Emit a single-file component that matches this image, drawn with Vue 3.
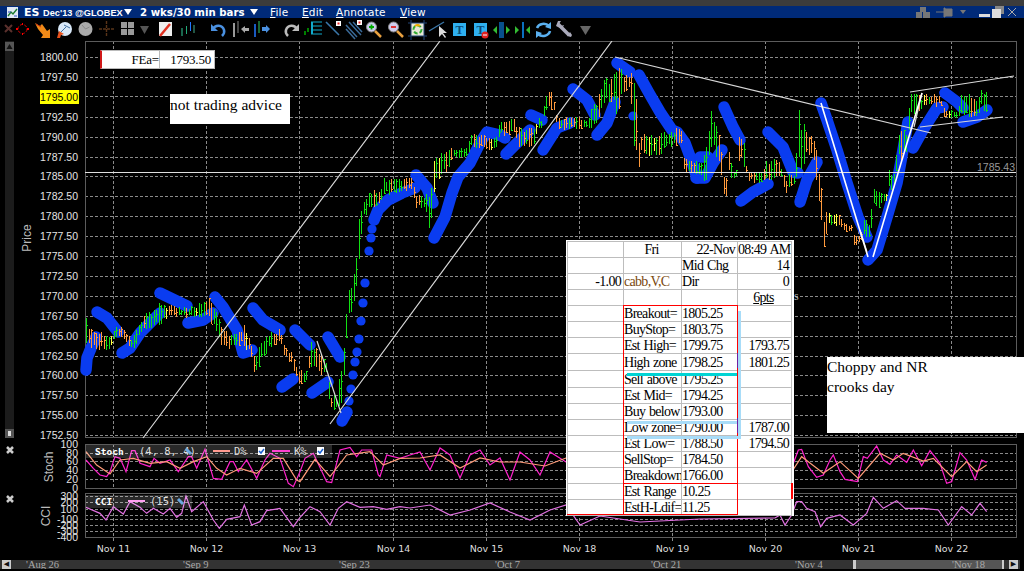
<template>
  <div class="window">
    <header class="titlebar">
      <svg class="app-ic" viewBox="0 0 11 11"><rect width="11" height="11" fill="#dfe8f5"/><path d="M1 9 4 5l2 2 4-5" fill="none" stroke="#1a7a30" stroke-width="1.4"/><path d="M1 5h3M7 9h3" stroke="#3050c0"/></svg>
      <span class="sym"><b>ES</b> <small>Dec'13 @GLOBEX</small></span>
      <i class="caret"></i>
      <span class="period">2 wks/30 min bars</span>
      <i class="caret"></i>
      <nav class="menu">
        <span><u>F</u>ile</span>
        <span><u>E</u>dit</span>
        <span><u>A</u>nnotate</span>
        <span><u>V</u>iew</span>
      </nav>
      <div class="winctl">
        <svg width="16" height="13" viewBox="0 0 16 13"><path d="M5 1h6v5H5zM1 6h6v6H1zM8 6h7v6H8z" fill="#777"/></svg>
        <svg class="pin" width="18" height="13" viewBox="0 0 18 13"><path d="M0 6h8M8 2h1v9H8zM9 3h7v7H9z" stroke="#777" fill="#777"/></svg>
        <i class="caret small"></i>
        <svg class="min" width="11" height="12" viewBox="0 0 11 12"><rect y="8" width="11" height="3" fill="#ddd"/></svg>
        <svg width="12" height="12" viewBox="0 0 12 12"><rect x="3" y="0" width="9" height="8" fill="#888"/><rect y="3" width="9" height="9" fill="#ddd"/></svg>
        <svg width="10" height="10" viewBox="0 0 10 10"><path d="m1 1 8 8M9 1 1 9" stroke="#aaa"/></svg>
      </div>
    </header>

    <div class="toolbar">
      <svg class="ic first" viewBox="0 0 21 22"><path d="m7 6 7 7M14 6l-7 7" stroke="#5a302c" stroke-width="2"/></svg>
      <svg class="ic back7" viewBox="0 0 21 22"><circle cx="10.5" cy="10" r="4.5" fill="none" stroke="#c00" stroke-width="1" stroke-dasharray="3 1.5"/><path d="M10 4h1v2h-1zM10 14h1v2h-1zM4 9h2v2H4zM15 9h2v2h-2z" fill="#f00"/></svg>
      <svg class="ic" viewBox="0 0 21 22"><path d="m2 4 5 3 2-2 5 7 3-2v9H8l2-3-5-6z" fill="#f08a18"/><path d="m3 5 5 3" stroke="#d03010"/></svg>
      <svg class="ic" viewBox="0 0 21 22"><circle cx="11" cy="10" r="7" fill="#d8e8f8"/><path d="M7 13 12 8M10 6l6 3" stroke="#4070a0"/><path d="m3 19 2-7 5 3-3 1-1 3z" fill="#e8501a"/></svg>
      <svg class="ic" viewBox="0 0 21 22"><circle cx="10.5" cy="10" r="7" fill="#aaa"/><path d="M10.5 10 7 6M10.5 10l4-2" stroke="#888"/></svg>
      <svg class="ic" viewBox="0 0 21 22"><path d="M10.5 2v16M3 10h15" stroke="#5a3418" stroke-width="1.4" stroke-dasharray="3 1"/></svg>
      <svg class="ic" viewBox="0 0 21 22"><path d="M4 3h6v6H4zM11 3h6v6h-6zM4 10h6v6H4zM11 10h6v6h-6z" fill="#999"/></svg>
      <svg class="ic back4" viewBox="0 0 21 22"><path d="m6 7h9l-4.500 8z" fill="#555"/></svg>
      <svg class="ic" viewBox="0 0 21 22"><rect x="4" y="3" width="13" height="14" fill="#eee"/><path d="m5 17 10-12" stroke="#e03020" stroke-width="2.500"/></svg>
      <svg class="ic on1" viewBox="0 0 21 22"><path d="M5 9v8" stroke="#3c9" /><path d="M9.500 7v8" stroke="#2a7"/><path d="M13.500 3v9" stroke="#27f"/><path d="M17 6v8" stroke="#4a8"/></svg>
      <svg class="ic on10" viewBox="0 0 21 22"><path d="M5 10a6 6 0 0 1 11 1q1 3-2 6" fill="none" stroke="#4a90e0" stroke-width="2.500"/><path d="M3 5v7h7z" fill="#4a90e0"/></svg>
      <svg class="ic" viewBox="0 0 21 22"><path d="M5 4v14" stroke="#999" stroke-width="2"/><path d="M9 2v12" stroke="#888"/><path d="m12 10 4-3v2h4v3h-4v2z" fill="#aaa"/></svg>
      <svg class="ic on1" viewBox="0 0 21 22"><path d="M4 5v13" stroke="#27f" stroke-width="1.500"/><path d="M8 2v12" stroke="#3c6"/><path d="M11 8h4V6l4 4-4 4v-2h-4z" fill="#4a90e0"/></svg>
      <svg class="ic on9" viewBox="0 0 21 22"><path d="M16 10a6 6 0 0 0-11 1q-1 3 2 6" fill="none" stroke="#bbb" stroke-width="2.500"/><path d="M18 5v7h-7z" fill="#bbb"/></svg>
      <svg class="ic on1" viewBox="0 0 21 22"><path d="M2 16v-4M5 13V9" stroke="#0a0" stroke-width="1.500"/><path d="M8 3h11M8 7h11M8 11h11M8 15h11" stroke="#1ac" /><path d="M9 3v12" stroke="#1ac" stroke-width="2"/></svg>
      <svg class="ic back1" viewBox="0 0 21 22"><path d="m3 3 13 13" stroke="#3a76a8" stroke-width="1.600"/><rect x="13" y="2" width="5" height="5" fill="#fff"/><rect x="14.500" y="3.500" width="2" height="2" fill="#e22"/></svg>
      <svg class="ic" viewBox="0 0 21 22"><path d="m2 6 11 12M2 10l9 10M5 3l12 13M9 3l9 10" stroke="#3a6a98" stroke-width="1.500"/><rect x="13" y="1" width="5" height="5" fill="#fff"/><rect x="14.500" y="2.500" width="2" height="2" fill="#e22"/></svg>
      <svg class="ic back2" viewBox="0 0 21 22"><circle cx="8.500" cy="8" r="5" fill="#cce" stroke="#888"/><path d="M6 8h5M8.500 5.500v5" stroke="#0a0" stroke-width="1.800"/><path d="m12 12 6 6" stroke="#e8a040" stroke-width="2.500"/></svg>
      <svg class="ic on1" viewBox="0 0 21 22"><circle cx="8.500" cy="8" r="5" fill="#cce" stroke="#888"/><path d="M6 8h5" stroke="#d22" stroke-width="1.800"/><path d="m12 12 6 6" stroke="#e8a040" stroke-width="2.500"/></svg>
      <svg class="ic on1" viewBox="0 0 21 22"><rect x="4" y="4" width="13" height="13" fill="#e8e8d8"/><circle cx="10.500" cy="10.500" r="4" fill="none" stroke="#3a3" stroke-width="2" stroke-dasharray="4 2"/><path d="M8 7a4 4 0 0 1 5 0" fill="none" stroke="#ea0" stroke-width="2"/><path d="M4 1v20M17 1v20M1 4h19M1 17h19" stroke="#247" /></svg>
      <svg class="ic" viewBox="0 0 21 22"><path d="m1 12 15-9" stroke="#3a76a8" stroke-width="1.400"/><path d="M11 7v11l3-3 3 4 1-1-3-4h4z" fill="#ddd"/></svg>
      <svg class="ic" viewBox="0 0 21 22"><rect x="4" y="4" width="13" height="13" fill="#2fb0f0"/><text x="10.500" y="15" class="t-ic">T</text></svg>
      <svg class="ic" viewBox="0 0 21 22"><rect x="4" y="4" width="13" height="13" fill="#2fb0f0"/><text x="10.500" y="15" class="t-ic">T</text><circle cx="15" cy="16" r="3.500" fill="#e02020"/><path d="M13 16h4" stroke="#fff"/></svg>
      <svg class="ic" viewBox="0 0 21 22"><rect x="8" y="3" width="5" height="16" fill="#08508c"/><path d="M6 7v8l-4-4zM15 7v8l4-4z" fill="#3b3"/></svg>
      <svg class="ic" viewBox="0 0 21 22"><rect x="10" y="3" width="2" height="16" fill="#0a70c0"/><path d="M3 7v8l4-4zM18 7v8l-4-4z" fill="#3b3"/></svg>
      <svg class="ic" viewBox="0 0 21 22"><path d="M4 9a7 6 0 0 1 12-2M17 12a7 6 0 0 1-12 3" fill="none" stroke="#5ab0f0" stroke-width="2.500"/><path d="m18 3 0 7-6-2zM3 19l0-7 6 2z" fill="#5ab0f0"/></svg>
      <svg class="ic back1" viewBox="0 0 21 22"><path d="m5 5 11 11" stroke="#aab" stroke-width="3.500"/><path d="M3 7 5 2h3L6 5l2 2 3-1-2 4zM14 17l3-4 2 3-1 2z" fill="#aab"/></svg>
      <svg class="ic on1" viewBox="0 0 21 22"><path d="M5 7h11l-5.500 9z" fill="#666"/></svg>
    </div>

    <div class="chart">
      <svg class="canvas" viewBox="0 41 1024 519" width="1024" height="519">
        <!-- left strip -->
        <rect x="5" y="41" width="9" height="397" fill="#1c1c1c"/>
        <rect x="5" y="42" width="9" height="9" fill="#555"/>
        <path d="M6.500 49 9.500 44l3 5z" fill="#111"/>
        <rect x="5" y="429" width="9" height="9" fill="#555"/>
        <rect x="8" y="431" width="3" height="5" fill="#ddd"/>
        <path d="m7 447 6 6M13 447l-6 6M7 496l6 6M13 496l-6 6" stroke="#ccc" stroke-width="2.500"/>

        <!-- grids -->
        <g class="grid">
          <path v-for="x in dayXs" :key="x" :d="`M${x} 41V437M${x} 444V489M${x} 493V541`"/>
          <path v-for="p in priceRows" :key="p.label" :d="`M85 ${p.y}H1016`"/>
          <path v-for="y in stochYs" :key="'s' + y" :d="`M85 ${y}H1016`"/>
          <path v-for="y in cciYs" :key="'c' + y" :d="`M85 ${y}H1016`"/>
        </g>
        <g class="frame">
          <rect x="85.500" y="41.500" width="931" height="396"/>
          <rect x="85.500" y="444.500" width="931" height="44"/>
          <rect x="85.500" y="493.500" width="931" height="44"/>
        </g>

        <!-- axis labels -->
        <text v-for="p in priceRows" :key="p.label" x="78" :y="p.y + 3.5" class="axis">{{ p.label }}</text>
        <rect x="40" y="90" width="39" height="14" fill="#ffff00"/>
        <text x="78" y="100.500" class="axis dark">1795.00</text>
        <text v-for="s in stochLabels" :key="s.t" x="78" :y="s.y + 4" class="axis">{{ s.t }}</text>
        <text v-for="s in cciLabels" :key="s.t" x="78" :y="s.y + 4" class="axis">{{ s.t }}</text>
        <text class="side" transform="translate(31 238) rotate(-90)">Price</text>
        <text class="side" transform="translate(53 467) rotate(-90)">Stoch</text>
        <text class="side" transform="translate(50 516) rotate(-90)">CCI</text>
        <text v-for="d in days" :key="d.t" :x="d.x" y="552" class="date">{{ d.t }}</text>

        <!-- blue trend dots -->
        <g class="blue">
          <polyline v-for="(s, i) in blueSegs" :key="i" :points="s.join(' ')"/>
        </g>
        <circle v-for="(d, i) in blueDots" :key="i" :cx="d[0]" :cy="d[1]" r="4.600" fill="#0a3cf0"/>

        <!-- price bars -->
        <path :d="bars.green" class="bar" stroke="#12e012"/>
        <path :d="bars.orange" class="bar" stroke="#ff9a3c"/>
        <path :d="bars.yellow" class="bar" stroke="#ffff40"/>

        <!-- drawn lines -->
        <g class="lines">
          <path d="M143 438 440 41M330 424 612 41M615 57 931 133M910 92 1014 76M920 127 1003 117M317 341 341 413M860 230 867 252M914 127 922 93"/>
          <path class="thin" d="M85 172.500H1016"/>
          <path class="thick" d="M821 103 868 257M873 257 922 93"/>
        </g>
        <text x="1015" y="171" class="last">1785.43</text>

        <!-- stoch + cci -->
        <polyline :points="stochK" class="ln" stroke="#ff22cc"/>
        <polyline :points="stochD" class="ln" stroke="#ff9a78"/>
        <polyline :points="cci" class="ln" stroke="#e070e0"/>

        <rect x="86" y="445" width="246" height="13" fill="#fff" opacity=".16"/>
        <rect x="86" y="495" width="106" height="13" fill="#fff" opacity=".16"/>
        <text x="95" y="455" class="lg b">Stoch</text>
        <text x="139" y="455" class="lg">(4, 8, 4)</text>
        <path d="m186 449 5 5" stroke="#6aa8e0" stroke-width="3"/>
        <path d="M213 451h17" stroke="#ff9a90" stroke-width="2"/>
        <text x="234" y="455" class="lg">D%</text>
        <rect x="258" y="447" width="7" height="8" fill="#fff"/>
        <path d="m259 451 2 2 3-4" fill="none" stroke="#1a60d0" stroke-width="1.500"/>
        <path d="M272 451h18" stroke="#ff40d0" stroke-width="2"/>
        <text x="294" y="455" class="lg">K%</text>
        <rect x="317" y="447" width="7" height="8" fill="#fff"/>
        <path d="m318 451 2 2 3-4" fill="none" stroke="#1a60d0" stroke-width="1.500"/>
        <text x="95" y="505" class="lg b">CCI</text>
        <path d="M128 501h17" stroke="#ffa0f0" stroke-width="2"/>
        <text x="150" y="505" class="lg">(15)</text>
        <path d="m178 499 5 5" stroke="#6aa8e0" stroke-width="3"/>
        <text x="794" y="300" class="stray">s</text>
      </svg>

      <div class="fea">
        <span class="fea-l">FEa=</span>
        <span class="fea-v">1793.50</span>
      </div>
      <div class="note advice">not trading advice</div>
      <div class="note choppy">Choppy and NR<br>crooks day</div>

      <div class="sheet">
        <table>
          <tr v-for="(r, i) in sheetRows" :key="i" :class="{ tall: i === 7 || i === 8 }">
            <td class="num">{{ r[0] }}</td>
            <td :class="{ cabb: r[1] === 'cabb,V,C', ctr: r[1] === 'Fri' }">{{ r[1] }}</td>
            <td :class="{ num: r[2] === '22-Nov' }">{{ r[2] }}</td>
            <td class="num" :class="{ und: r[3] === '6pts' }">{{ r[3] }}</td>
          </tr>
        </table>
        <i class="redline rt"></i>
        <i class="redline rb"></i>
        <i class="redline rl"></i>
        <i class="redline rr"></i>
        <i class="redline redsplit"></i>
        <i class="redline redleft"></i>
        <i class="redline redright"></i>
        <i class="purple p1"></i>
        <i class="purple p2"></i>
        <i class="mark cyan"></i>
        <i class="mark sky s1"></i>
        <i class="mark sky s2"></i>
        <i class="mark skyv"></i>
      </div>
    </div>

    <footer class="scrollbar">
      <b class="arrow">◀</b>
      <span v-for="m in months" :key="m.t" class="month" :style="{ width: m.w + 'px' }">{{ m.t }}</span>
      <i class="thumb"></i>
      <b class="arrow right">▶</b>
    </footer>
  </div>
</template>

<script setup>
import { computed } from 'vue'

const dayXs = [113, 206, 299, 393, 486, 579, 672, 765, 858, 951].map(x => x + 0.5)
const days = ['Nov 11', 'Nov 12', 'Nov 13', 'Nov 14', 'Nov 15', 'Nov 18', 'Nov 19', 'Nov 20', 'Nov 21', 'Nov 22']
  .map((t, i) => ({ t, x: dayXs[i] }))

const priceRows = []
for (let i = 0; i < 20; i++) {
  const price = 1800 - i * 2.5
  if (price === 1795) {
    priceRows.push({ label: '', y: 96.5 })
    continue
  }
  priceRows.push({ label: price.toFixed(2), y: Math.round(57 + i * 19.9) + 0.5 })
}

const stochYs = [453.5, 461.5, 470.5, 479.5]
const cciYs = [496.5, 502.5, 509.5, 515.5, 519.5, 525.5, 531.5]
const stochLabels = [
  { t: '100', y: 444 }, { t: '80', y: 453 }, { t: '60', y: 461 },
  { t: '40', y: 470 }, { t: '20', y: 479 }, { t: '0', y: 488 },
]
const cciLabels = [
  { t: '300', y: 496 }, { t: '200', y: 502 }, { t: '100', y: 509 },
  { t: '-100', y: 519 }, { t: '-200', y: 525 }, { t: '-300', y: 531 }, { t: '-400', y: 537 },
]

const blueSegs = [
  [[86, 370], [87, 358], [91, 348], [96, 337]],
  [[97, 312], [107, 318], [118, 332]],
  [[122, 353], [130, 348], [140, 333], [150, 323], [160, 313]],
  [[160, 293], [187, 306]],
  [[188, 323], [203, 320], [213, 313]],
  [[215, 297], [223, 307], [237, 330], [243, 353], [252, 350]],
  [[253, 308], [263, 320], [280, 330]],
  [[282, 387], [293, 379]],
  [[295, 330], [310, 345]],
  [[312, 393], [328, 382]],
  [[328, 337], [340, 357]],
  [[342, 421], [347, 412]],
  [[374, 220], [378, 210], [388, 200], [402, 193], [415, 188]],
  [[416, 175], [427, 188], [433, 203]],
  [[434, 238], [445, 217], [452, 193], [458, 177], [470, 163], [480, 143], [487, 132], [500, 135], [505, 138]],
  [[506, 154], [520, 140], [530, 130]],
  [[531, 115], [542, 120]],
  [[543, 150], [557, 128], [570, 123]],
  [[573, 89], [587, 100], [595, 115]],
  [[597, 135], [607, 123], [615, 102]],
  [[617, 63], [630, 72]],
  [[639, 75], [649, 93], [660, 112], [672, 130], [677, 132], [685, 143], [692, 162], [697, 178]],
  [[696, 178], [705, 178], [713, 163], [722, 150]],
  [[700, 157], [708, 157]],
  [[724, 107], [733, 127], [740, 140]],
  [[741, 201], [753, 192], [768, 184]],
  [[768, 132], [783, 147], [793, 172], [798, 173]],
  [[800, 202], [807, 180], [817, 162]],
  [[821, 103], [827, 120], [837, 150], [847, 183], [858, 217], [867, 237]],
  [[868, 260], [877, 250], [887, 217], [897, 183], [903, 150], [908, 122]],
  [[913, 148], [923, 130], [937, 108], [943, 107]],
  [[945, 93], [957, 102], [963, 108]],
  [[963, 122], [977, 117], [987, 110]],
]
const blueDots = [
  [349, 401], [351, 389], [353, 375], [355, 362], [357, 352], [359, 339], [361, 321],
  [363, 303], [365, 283], [369, 251], [371, 238], [372, 229], [633, 116],
]

// [x, top of bars, bottom of bars] read off the reference
const envelope = [
  [86, 318, 350], [92, 325, 350], [100, 330, 352], [108, 335, 352], [115, 328, 342], [122, 322, 338],
  [130, 338, 352], [137, 325, 345], [145, 310, 330], [152, 312, 328], [160, 300, 325], [170, 305, 318],
  [185, 307, 318], [195, 305, 318], [205, 295, 318], [212, 300, 325], [220, 320, 345], [230, 335, 350],
  [243, 323, 347], [250, 338, 355], [255, 353, 380], [262, 338, 360], [270, 330, 350], [280, 328, 345],
  [285, 347, 358], [293, 352, 367], [297, 370, 385], [307, 368, 385], [310, 340, 370], [320, 353, 377],
  [327, 360, 377], [330, 393, 413], [337, 393, 413], [343, 347, 407], [347, 295, 325], [353, 280, 313],
  [358, 223, 270], [363, 197, 223], [368, 190, 210], [380, 190, 205], [383, 177, 197], [413, 177, 190],
  [415, 193, 208], [427, 193, 213], [430, 193, 237], [435, 150, 183], [447, 150, 175], [452, 147, 160],
  [467, 147, 158], [470, 132, 150], [483, 132, 148], [487, 137, 150], [497, 137, 150], [500, 117, 137],
  [513, 117, 135], [520, 127, 150], [533, 127, 150], [537, 117, 133], [543, 117, 130], [545, 90, 110],
  [553, 92, 110], [557, 117, 130], [590, 117, 130], [592, 93, 132], [597, 100, 125], [603, 77, 103],
  [613, 77, 103], [615, 63, 107], [617, 63, 125], [622, 70, 93], [630, 72, 93], [635, 73, 170],
  [638, 135, 177], [640, 133, 157], [663, 133, 155], [670, 127, 147], [682, 127, 147], [683, 153, 172],
  [700, 160, 180], [707, 137, 187], [711, 107, 150], [718, 122, 163], [723, 170, 198], [727, 170, 198],
  [729, 142, 180], [733, 170, 178], [737, 170, 178], [739, 137, 170], [743, 133, 163], [747, 170, 183],
  [763, 172, 183], [767, 157, 183], [777, 157, 180], [782, 167, 180], [786, 173, 200], [790, 173, 187],
  [795, 173, 187], [798, 103, 170], [803, 120, 170], [807, 130, 157], [813, 130, 157], [818, 150, 213],
  [820, 173, 213], [823, 210, 260], [827, 210, 227], [840, 212, 227], [843, 223, 233], [852, 223, 233],
  [853, 233, 245], [860, 233, 245], [863, 220, 240], [870, 220, 240], [873, 185, 210], [880, 185, 210],
  [883, 193, 202], [887, 193, 202], [888, 168, 192], [895, 168, 192], [897, 125, 167], [907, 125, 160],
  [910, 93, 117], [920, 95, 117], [923, 93, 107], [940, 95, 107], [945, 107, 120], [957, 110, 120],
  [962, 90, 117], [970, 92, 117], [973, 97, 117], [980, 97, 117], [981, 83, 107], [983, 90, 117], [987, 90, 117],
]

function sample(x) {
  for (let i = 1; i < envelope.length; i++) {
    const [x1, t1, b1] = envelope[i]
    const [x0, t0, b0] = envelope[i - 1]
    if (x <= x1) {
      const k = (x - x0) / (x1 - x0 || 1)
      return [t0 + (t1 - t0) * k, b0 + (b1 - b0) * k]
    }
  }
  return [90, 117]
}

const bars = computed(() => {
  let seed = 1123
  const rnd = () => {
    seed = (seed * 16807) % 2147483647
    return seed / 2147483647
  }
  const out = { green: '', orange: '', yellow: '' }
  for (let fx = 86; fx <= 987; fx += 2.5) {
    const x = Math.round(fx)
    const [top, bottom] = sample(x)
    const span = bottom - top
    const hi = Math.round(top + rnd() * span * 0.3)
    const lo = Math.round(bottom - rnd() * span * 0.3)
    // rising stretches are mostly green, falling ones mostly orange
    const slope = sample(Math.max(86, x - 8))[0] - sample(x + 8)[0]
    const greenOdds = slope > 3 ? 0.9 : slope < -3 ? 0.12 : 0.5
    const roll = rnd()
    const key = roll < 0.05 ? 'yellow' : rnd() < greenOdds ? 'green' : 'orange'
    const c = Math.round(hi + rnd() * (lo - hi))
    out[key] += `M${x + 0.5} ${hi}V${lo}M${x + 1} ${c + 0.5}H${x + 2}`
  }
  return out
})

// indicator points, kept in zoomed crop units for the left and right thirds
const toPts = (list, ox, oy) => list.map(([x, y]) => `${ox + x / 3},${oy + y / 3}`)

const stochK = [
  ...toPts([[258, 90], [280, 115], [300, 135], [320, 140], [330, 125], [345, 80], [360, 85], [378, 125], [395, 62], [405, 62], [420, 100], [450, 110], [462, 85], [480, 100], [510, 90], [535, 125], [565, 80], [575, 80], [590, 115], [615, 58], [640, 145], [665, 148], [690, 95], [700, 95], [715, 125], [740, 90], [770, 145], [795, 90], [810, 70], [840, 85], [865, 160], [880, 170], [900, 125], [915, 85], [940, 70], [980, 155], [995, 158], [1020, 60], [1050, 52], [1070, 80], [1085, 60], [1115, 60], [1135, 135], [1140, 140], [1160, 75], [1200, 85]], 0, 430),
  '410,455', '420,452', '430,470', '440,448', '450,455', '460,478', '470,455', '480,450', '490,465', '500,458', '510,480', '520,452', '530,460', '540,475', '550,452', '566,462',
  '600,465', '700,465',
  ...toPts([[0, 100], [40, 100], [55, 60], [65, 58], [85, 110], [110, 142], [130, 135], [150, 90], [160, 75], [180, 125], [195, 148], [232, 155], [250, 80], [262, 85], [290, 48], [310, 90], [330, 103], [350, 75], [380, 97], [400, 60], [425, 107], [450, 62], [480, 100], [500, 160], [515, 155], [540, 68], [560, 90], [585, 148], [605, 90], [620, 97]], 780, 430),
].join(' ')

const stochD = [
  ...toPts([[258, 65], [290, 105], [330, 132], [360, 90], [400, 85], [450, 100], [500, 95], [540, 115], [580, 95], [620, 80], [650, 115], [680, 135], [720, 115], [770, 130], [820, 85], [850, 85], [890, 150], [900, 155], [945, 88], [990, 140], [1040, 75], [1110, 65], [1150, 105], [1200, 85]], 0, 430),
  '420,458', '440,455', '460,468', '480,458', '500,462', '520,462', '545,466', '566,458', '700,465',
  ...toPts([[0, 110], [40, 118], [65, 80], [85, 95], [130, 130], [180, 95], [235, 145], [300, 70], [340, 90], [370, 70], [430, 93], [460, 85], [515, 140], [560, 95], [590, 125], [620, 105]], 780, 430),
].join(' ')

const cci = [
  ...toPts([[258, 232], [300, 250], [318, 270], [340, 230], [370, 252], [390, 215], [420, 232], [440, 250], [460, 235], [490, 252], [510, 235], [530, 262], [545, 250], [558, 198], [575, 245], [610, 215], [640, 270], [658, 295], [680, 268], [720, 260], [733, 225], [755, 285], [780, 275], [800, 242], [840, 235], [880, 290], [900, 262], [930, 230], [960, 245], [990, 285], [1015, 235], [1040, 215], [1080, 232], [1120, 230], [1160, 238], [1200, 230]], 0, 430),
  '410,508', '430,505', '450,515', '470,510', '490,503', '510,512', '530,520', '550,510', '566,505',
  '580,525', '600,516', '640,522', '700,519', '775,518',
  ...toPts([[0, 255], [15, 285], [35, 255], [50, 215], [65, 215], [80, 235], [105, 245], [122, 290], [140, 265], [180, 255], [220, 285], [260, 250], [280, 202], [310, 235], [350, 212], [375, 235], [430, 235], [475, 240], [505, 285], [545, 230], [575, 255], [600, 220], [620, 245]], 780, 430),
].join(' ')

const sheetRows = [
  ['', 'Fri', '22-Nov', '08:49 AM'],
  ['', '', 'Mid Chg', '14'],
  ['-1.00', 'cabb,V,C', 'Dir', '0'],
  ['', '', '', '6pts'],
  ['', 'Breakout=', '1805.25', ''],
  ['', 'BuyStop=', '1803.75', ''],
  ['', 'Est High=', '1799.75', '1793.75'],
  ['', 'High zone', '1798.25', '1801.25'],
  ['', 'Sell above', '1795.25', ''],
  ['', 'Est Mid=', '1794.25', ''],
  ['', 'Buy below', '1793.00', ''],
  ['', 'Low zone=', '1790.00', '1787.00'],
  ['', 'Est Low=', '1788.50', '1794.50'],
  ['', 'SellStop=', '1784.50', ''],
  ['', 'Breakdown', '1766.00', ''],
  ['', 'Est Range', '10.25', ''],
  ['', 'EstH-Ldif=', '11.25', ''],
]

const months = [
  { t: "'Aug 26", w: 157 }, { t: "'Sep 9", w: 156 }, { t: "'Sep 23", w: 156 }, { t: "'Oct 7", w: 156 },
  { t: "'Oct 21", w: 144 }, { t: "'Nov 4", w: 157 }, { t: "'Nov 18", w: 50 },
]
</script>

<style>
html, body { margin: 0; background: #000; overflow: hidden; }
</style>

<style scoped>
.window { width: 1024px; height: 571px; box-sizing: border-box; background: #000; border-top: 6px solid #3c3c3c; display: flex; flex-direction: column; font-family: "Liberation Sans", sans-serif; overflow: hidden; }

.titlebar { height: 12px; flex: none; background: #002a78; color: #fff; display: flex; align-items: center; padding-left: 7px; font-family: "DejaVu Sans", sans-serif; font-size: 10.5px; white-space: nowrap; }
.app-ic { width: 11px; height: 11px; flex: none; margin-right: 6px; }
.sym { font-weight: bold; width: 95px; flex: none; }
.sym b { font-size: 11px; }
.sym small { font-family: "Liberation Sans", sans-serif; font-size: 9.2px; }
.caret { width: 0; height: 0; border-left: 4.5px solid transparent; border-right: 4.5px solid transparent; border-top: 6px solid #fff; margin: 0 8px 0 5px; flex: none; }
.caret.small { border-left-width: 3px; border-right-width: 3px; border-top: 4px solid #777; margin: 0 10px 0 3px; }
.period { font-weight: bold; font-size: 10.2px; width: 105px; flex: none; }
.menu { display: flex; margin-left: 4px; font-size: 10.5px; letter-spacing: .2px; }
.menu span:nth-child(1) { width: 32px; }
.menu span:nth-child(2) { width: 34px; }
.menu span:nth-child(3) { width: 64px; }
.winctl { margin-left: auto; margin-right: 7px; display: flex; align-items: center; gap: 3px; }
.pin { margin-left: 2px; }
.min { margin-right: -1px; }

.toolbar { height: 23px; flex: none; display: flex; align-items: center; }
.ic { width: 21px; height: 22px; flex: none; }
.first { margin-left: -2.5px; }
.back7 { margin-left: -7px; }
.back4 { margin-left: -4px; }
.back2 { margin-left: -2px; }
.back1 { margin-left: -1px; }
.on1 { margin-left: 1px; }
.on9 { margin-left: 9px; }
.on10 { margin-left: 10px; }
.t-ic { font-family: "Liberation Serif", serif; font-weight: bold; font-size: 12px; text-anchor: middle; fill: #0a4a78; }

.chart { position: relative; height: 519px; flex: none; }
.canvas { display: block; }
.grid path { stroke: #8a8a8a; stroke-dasharray: 3 2; fill: none; shape-rendering: crispEdges; }
.frame rect { fill: none; stroke: #5c5c5c; shape-rendering: crispEdges; }
.axis { font-family: "Liberation Sans", sans-serif; font-size: 10.5px; fill: #e4e4e4; text-anchor: end; }
.axis.dark { fill: #000; }
.side { font-family: "Liberation Sans", sans-serif; font-size: 12px; fill: #bbb; text-anchor: middle; }
.date { font-family: "DejaVu Sans", sans-serif; font-size: 9.5px; fill: #ddd; text-anchor: middle; }
.blue polyline { fill: none; stroke: #0a3cf0; stroke-width: 11.5; stroke-linecap: round; stroke-linejoin: round; }
.bar { fill: none; stroke-width: 1; shape-rendering: crispEdges; }
.lines path { fill: none; stroke: #d8d8d8; stroke-width: 1.2; }
.lines .thin { stroke: #e0e0e0; stroke-width: 1; shape-rendering: crispEdges; }
.lines .thick { stroke: #fff; stroke-width: 1.6; }
.last { font-family: "Liberation Sans", sans-serif; font-size: 10.5px; fill: #999; text-anchor: end; }
.ln { fill: none; stroke-width: 1.2; }
.lg { font-family: "DejaVu Sans Mono", monospace; font-size: 10.5px; fill: #ddd; }
.lg.b { font-weight: bold; font-size: 9.5px; fill: #fff; }
.stray { font-family: "Liberation Serif", serif; font-size: 12px; fill: #bbb; }

.fea { position: absolute; left: 100px; top: 9px; width: 115px; height: 19px; box-sizing: border-box; background: #fff; border: 1px solid #bbb; border-left: 2px solid #d01818; display: flex; font-family: "Liberation Serif", serif; font-size: 13px; letter-spacing: -.2px; line-height: 17px; color: #000; }
.fea-l { width: 57px; text-align: right; border-right: 1px solid #bbb; padding-right: 0; }
.fea-v { flex: 1; text-align: right; padding-right: 3px; }
.note { position: absolute; background: #fff; color: #000; font-family: "Liberation Serif", serif; font-size: 15.5px; box-sizing: border-box; }
.advice { left: 170px; top: 53px; width: 120px; height: 30px; line-height: 22px; white-space: nowrap; }
.choppy { left: 827px; top: 316px; width: 197px; height: 76px; line-height: 20px; }

.sheet { position: absolute; left: 566px; top: 199px; width: 228px; height: 276px; background: #fff; overflow: hidden; }
.sheet table { border-collapse: collapse; table-layout: fixed; width: 225px; margin: 1px 0 0 1px; font-family: "Liberation Serif", serif; font-size: 14px; letter-spacing: -.7px; word-spacing: 1px; color: #000; }
.sheet td { border: 1px solid #bdbdbd; height: 15px; padding: 0 2px 0 0; line-height: 15px; white-space: nowrap; overflow: hidden; }
.sheet tr.tall td { height: 16px; }
.sheet td:nth-child(1) { width: 53px; }
.sheet td:nth-child(2) { width: 55px; }
.sheet td:nth-child(3) { width: 53px; }
.num { text-align: right; }
.ctr { text-align: center; }
.und { text-align: center !important; text-decoration: underline; }
.cabb { color: #7a4a10; }
.sheet i { position: absolute; display: block; }
.redline { background: #ff0000; }
.rt { left: 57px; top: 65px; width: 115px; height: 1px; }
.rb { left: 57px; top: 274px; width: 115px; height: 1px; }
.rl { left: 57px; top: 65px; width: 1px; height: 210px; }
.rr { left: 171px; top: 65px; width: 1px; height: 210px; }
.redsplit { left: 57px; top: 243px; width: 115px; height: 1px; }
.redleft { left: 1px; top: 274px; width: 57px; height: 1px; }
.redright { left: 225px; top: 243px; width: 2px; height: 16px; }
.purple { left: 171px; width: 1px; height: 15px; background: #7020a0; }
.p1 { top: 113px; }
.p2 { top: 178px; }
.mark { height: 3px; left: 61px; width: 110px; }
.cyan { top: 133px; background: #00d4d4; }
.sky { background: #a8dcf8; }
.s1 { top: 181px; }
.s2 { top: 196px; width: 113px; }
.skyv { left: 172px; top: 71px; width: 3px; height: 128px; background: #a8dcf8; }

.scrollbar { height: 9px; flex: none; margin-right: 4px; background: #333; display: flex; align-items: center; position: relative; font-family: "Liberation Serif", serif; font-size: 10.5px; color: #aaa; margin-left: 0; white-space: nowrap; overflow: hidden; }
.arrow { width: 9px; height: 9px; margin-left: 2px; background: #ccc; color: #111; font-size: 7px; line-height: 9px; text-align: center; font-weight: normal; flex: none; font-family: "DejaVu Sans", sans-serif; margin-right: 15px; }
.arrow.right { position: absolute; right: 2px; margin: 0; }
.month { display: block; flex: none; position: relative; z-index: 1; }
.thumb { position: absolute; left: 853px; right: 16px; top: 0; bottom: 0; background: #555; border-left: 3px solid #ccc; border-right: 2px solid #ccc; }
</style>
